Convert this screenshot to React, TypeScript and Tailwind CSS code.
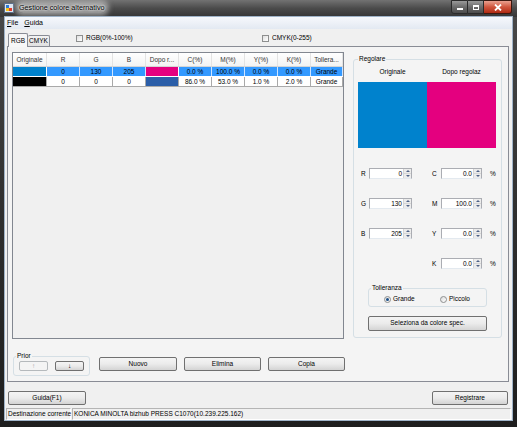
import * as React from "react";

interface TableRow {
  original: string;
  adjusted: string;
  selected: boolean;
  values: string[];
}

const columns = ["Originale", "R", "G", "B", "Dopo r...", "C(%)", "M(%)", "Y(%)", "K(%)", "Tollera..."];
const colWidths = ["w-[34px]", "w-[33px]", "w-[33px]", "w-[33px]", "w-[33px]", "w-[33px]", "w-[33px]", "w-[33px]", "w-[33px]", "w-[32px]"];

const rows: TableRow[] = [
  {
    original: "bg-[#0082cd]",
    adjusted: "bg-[#e4007f]",
    selected: true,
    values: ["0", "130", "205", "0.0 %", "100.0 %", "0.0 %", "0.0 %", "Grande"]
  },
  {
    original: "bg-black",
    adjusted: "bg-[#2b5ea8]",
    selected: false,
    values: ["0", "0", "0", "86.0 %", "53.0 %", "1.0 %", "2.0 %", "Grande"]
  }
];

function WinButton({ label, className, disabled }: { label: string; className: string; disabled?: boolean }) {
  return (
    <div
      className={`flex items-center justify-center rounded-[2px] border leading-none ${
        disabled
          ? "border-[#b5b9bc] bg-[#f4f4f4] text-[#a3a3a3]"
          : "border-[#707070] bg-linear-to-b from-[#f4f4f4] via-[#ebebeb] to-[#d4d4d4] text-black"
      } ${className}`}
    >
      {label}
    </div>
  );
}

function Checkbox() {
  return <div className="h-[7px] w-[7px] border border-[#8e8f8f] bg-linear-to-br from-[#e0e0e0] to-white" />;
}

function Radio({ checked }: { checked?: boolean }) {
  return (
    <div className="flex h-[7px] w-[7px] items-center justify-center rounded-full border border-[#8e8f8f] bg-linear-to-br from-[#dcdcdc] to-white">
      {checked && <div className="h-[3px] w-[3px] rounded-full bg-[#1b4f87]" />}
    </div>
  );
}

function SpinBox({ value, width }: { value: string; width: string }) {
  return (
    <div className={`flex h-[11px] ${width} border border-[#abadb3] border-b-[#e3e9ef] bg-white`}>
      <div className="flex-1 pr-[1px] text-right leading-[9px]">{value}</div>
      <div className="flex w-[8px] flex-col border-l border-[#d5d5d5] bg-[#ececec]">
        <div className="flex flex-1 items-center justify-center border-b border-[#d5d5d5]">
          <svg width="4" height="2" viewBox="0 0 4 2">
            <path d="M0 2 L2 0 L4 2 Z" fill="#4d6185" />
          </svg>
        </div>
        <div className="flex flex-1 items-center justify-center">
          <svg width="4" height="2" viewBox="0 0 4 2">
            <path d="M0 0 L2 2 L4 0 Z" fill="#4d6185" />
          </svg>
        </div>
      </div>
    </div>
  );
}

function ColorTable() {
  return (
    <div className="h-[287px] w-[332px] border border-[#828790] bg-[#f0f0f0]">
      <div className="flex h-[14px] border-b border-[#d5d5d5] bg-linear-to-b from-white to-[#f3f3f3] text-[#333]">
        {columns.map((col, i) => (
          <div key={i} className={`${colWidths[i]} flex items-center justify-center border-r border-[#e3e3e3] whitespace-nowrap`}>
            {col}
          </div>
        ))}
      </div>
      {rows.map((row, r) => (
        <div key={r} className={`flex h-[10px] border-b ${row.selected ? "border-white" : "border-[#a9a9a9]"}`}>
          <div className={`${colWidths[0]} ${row.original} border-r ${row.selected ? "border-white" : "border-[#a9a9a9]"}`} />
          {row.values.slice(0, 3).map((v, i) => (
            <div
              key={i}
              className={`${colWidths[i + 1]} flex items-center justify-center border-r ${
                row.selected ? "border-[#cfe4ff] bg-[#3399ff]" : "border-[#a9a9a9] bg-white"
              }`}
            >
              {v}
            </div>
          ))}
          <div className={`${colWidths[4]} ${row.adjusted} border-r ${row.selected ? "border-white" : "border-[#a9a9a9]"}`} />
          {row.values.slice(3).map((v, i) => (
            <div
              key={i}
              className={`${colWidths[i + 5]} flex items-center justify-center border-r whitespace-nowrap ${
                row.selected ? "border-[#cfe4ff] bg-[#3399ff]" : "border-[#a9a9a9] bg-white"
              }`}
            >
              {v}
            </div>
          ))}
        </div>
      ))}
    </div>
  );
}

function AdjustPanel() {
  const spinRows = [
    { left: "R", leftValue: "0", right: "C", rightValue: "0.0" },
    { left: "G", leftValue: "130", right: "M", rightValue: "100.0" },
    { left: "B", leftValue: "205", right: "Y", rightValue: "0.0" },
    { left: "", leftValue: "", right: "K", rightValue: "0.0" }
  ];
  return (
    <fieldset className="ml-[9px] mt-[3px] h-[283px] w-[149px] rounded-[3px] border border-[#d5dfe5] px-[4px]">
      <legend className="px-[1px] leading-[8px]">Regolare</legend>
      <div className="mt-[5px] flex h-[8px] leading-[8px]">
        <div className="w-[69px] text-center">Originale</div>
        <div className="w-[69px] text-center">Dopo regolaz</div>
      </div>
      <div className="mt-[6px] flex h-[66px]">
        <div className="w-[69px] bg-[#0082cd]" />
        <div className="w-[69px] bg-[#e4007f]" />
      </div>
      <div className="mt-[20px] flex flex-col gap-[19px]">
        {spinRows.map((s, i) => (
          <div key={i} className="flex h-[11px] items-center">
            {s.left ? (
              <>
                <div className="w-[11px] pl-[3px]">{s.left}</div>
                <SpinBox value={s.leftValue} width="w-[43px]" />
              </>
            ) : (
              <div className="w-[54px]" />
            )}
            <div className="w-[20px]" />
            <div className="w-[9px]">{s.right}</div>
            <SpinBox value={s.rightValue} width="w-[41px]" />
            <div className="ml-[8px]">%</div>
          </div>
        ))}
      </div>
      <fieldset className="ml-[10px] mt-[15px] h-[23px] w-[119px] rounded-[3px] border border-[#d5dfe5] px-[2px]">
        <legend className="px-[1px] leading-[8px]">Tolleranza</legend>
        <div className="mt-[3px] flex h-[8px] items-center pl-[13px]">
          <div className="flex w-[56px] items-center gap-[2px]">
            <Radio checked />
            <span>Grande</span>
          </div>
          <div className="flex items-center gap-[2px]">
            <Radio />
            <span>Piccolo</span>
          </div>
        </div>
      </fieldset>
      <WinButton label="Seleziona da colore spec." className="ml-[10px] mt-[9px] h-[15px] w-[119px]" />
    </fieldset>
  );
}

export default function App() {
  return (
    <div className="flex h-[427px] w-[517px] flex-col bg-linear-to-b from-[#4a4a4a] via-[#2f2f2f] to-[#1e1e1e] font-['Liberation_Sans',Arial,sans-serif] text-[6.5px] text-black">
      {/* title bar */}
      <div className="flex h-[17px] items-start bg-linear-to-b from-[#727272] via-[#4a4a4a] to-[#363636]">
        <svg className="ml-[4px] mt-[3px]" width="10" height="10" viewBox="0 0 10 10">
          <rect x="0.5" y="0.5" width="9" height="9" fill="#dfe7f1" stroke="#5c6f8a" />
          <rect x="2" y="2" width="3" height="3" fill="#2c7ad6" />
          <rect x="5" y="5" width="3" height="3" fill="#e23b2e" />
          <rect x="2" y="5" width="3" height="3" fill="#f2c21a" />
        </svg>
        <div className="ml-[4px] mt-[3px] rounded-[6px] bg-[#d8d8d8]/55 px-[1px] text-[7.2px] leading-[10px] shadow-[0_0_5px_3px_rgba(220,220,220,0.55)] [text-shadow:0_0_3px_#fff,0_0_2px_#fff]">
          Gestione colore alternativo
        </div>
        <div className="ml-auto mr-[5px] flex h-[14px]">
          <div className="flex w-[17px] items-center justify-center rounded-bl-[3px] border border-[#2b2b2b] bg-linear-to-b from-[#9a9a9a] via-[#6c6c6c] to-[#4c4c4c]">
            <div className="mt-[3px] h-[2px] w-[6px] bg-white" />
          </div>
          <div className="flex w-[16px] items-center justify-center border border-l-0 border-[#2b2b2b] bg-linear-to-b from-[#9a9a9a] via-[#6c6c6c] to-[#4c4c4c]">
            <div className="h-[5px] w-[6px] border border-t-2 border-white" />
          </div>
          <div className="flex w-[28px] items-center justify-center rounded-br-[3px] border border-l-0 border-[#3b1810] bg-linear-to-b from-[#e9a090] via-[#d0553d] to-[#b02a12]">
            <svg width="8" height="7" viewBox="0 0 8 7">
              <path d="M1 0.5 L7 6.5 M7 0.5 L1 6.5" stroke="#fff" strokeWidth="1.8" />
            </svg>
          </div>
        </div>
      </div>

      <div className="flex flex-1 flex-col px-[5px] pb-[7px]">
        <div className="flex h-[403px] w-[507px] flex-col bg-[#f0f0f0] shadow-[0_0_0_1px_#9fb3c8]">
          {/* menu */}
          <div className="flex h-[12px] items-center gap-[6px] bg-linear-to-b from-[#f6f8fc] to-[#e3e9f2] pl-[2px] text-[7px]">
            <span>
              <span className="underline">F</span>ile
            </span>
            <span>
              <span className="underline">G</span>uida
            </span>
          </div>

          {/* tabs */}
          <div className="mt-[4px] flex h-[13px] items-end pl-[3px]">
            <div className="relative z-10 -mb-px flex h-[14px] w-[20px] items-center justify-center rounded-t-[2px] border border-b-0 border-[#898c95] bg-[#f7f7f7]">
              RGB
            </div>
            <div className="flex h-[11px] w-[22px] items-center justify-center rounded-t-[2px] border border-b-0 border-l-0 border-[#898c95] bg-linear-to-b from-[#f3f3f3] to-[#e0e0e0]">
              CMYK
            </div>
            <div className="mb-[3px] ml-[26px] flex w-[186px] items-center gap-[3px] self-center">
              <Checkbox />
              <span>RGB(0%-100%)</span>
            </div>
            <div className="mb-[3px] flex items-center gap-[3px] self-center">
              <Checkbox />
              <span>CMYK(0-255)</span>
            </div>
          </div>

          {/* tab panel */}
          <div className="ml-[2px] flex h-[336px] w-[502px] flex-col border border-[#898c95] bg-[#f4f4f4] pl-[4px] pt-[5px]">
            <div className="flex h-[287px] items-start">
              <ColorTable />
              <AdjustPanel />
            </div>
            <div className="mt-[13px] flex h-[24px] items-start">
              <fieldset className="ml-[1px] h-[24px] w-[77px] rounded-[3px] border border-[#d5dfe5] px-[2px]">
                <legend className="px-[1px] leading-[8px]">Prior</legend>
                <div className="mt-[1px] flex pl-[3px]">
                  <WinButton label="↑" disabled className="h-[10px] w-[29px]" />
                  <WinButton label="↓" className="ml-[7px] h-[10px] w-[29px]" />
                </div>
              </fieldset>
              <WinButton label="Nuovo" className="ml-[9px] mt-[5px] h-[14px] w-[78px]" />
              <WinButton label="Elimina" className="ml-[7px] mt-[5px] h-[14px] w-[77px]" />
              <WinButton label="Copia" className="ml-[7px] mt-[5px] h-[14px] w-[77px]" />
            </div>
          </div>

          {/* bottom buttons */}
          <div className="mt-[9px] flex h-[14px] justify-between">
            <WinButton label="Guida(F1)" className="ml-[3px] h-[14px] w-[78px]" />
            <WinButton label="Registrare" className="mr-[4px] h-[14px] w-[76px]" />
          </div>

          {/* status bar */}
          <div className="mt-[3px] flex h-[12px] gap-[1px] px-[1px]">
            <div className="flex w-[65px] items-center border border-[#b5b5b5] border-b-white border-r-white pl-[1px] whitespace-nowrap">
              Destinazione corrente
            </div>
            <div className="flex flex-1 items-center border border-[#b5b5b5] border-b-white border-r-white pl-[1px] whitespace-nowrap">
              KONICA MINOLTA bizhub PRESS C1070(10.239.225.162)
            </div>
          </div>
        </div>
      </div>
    </div>
  );
}
